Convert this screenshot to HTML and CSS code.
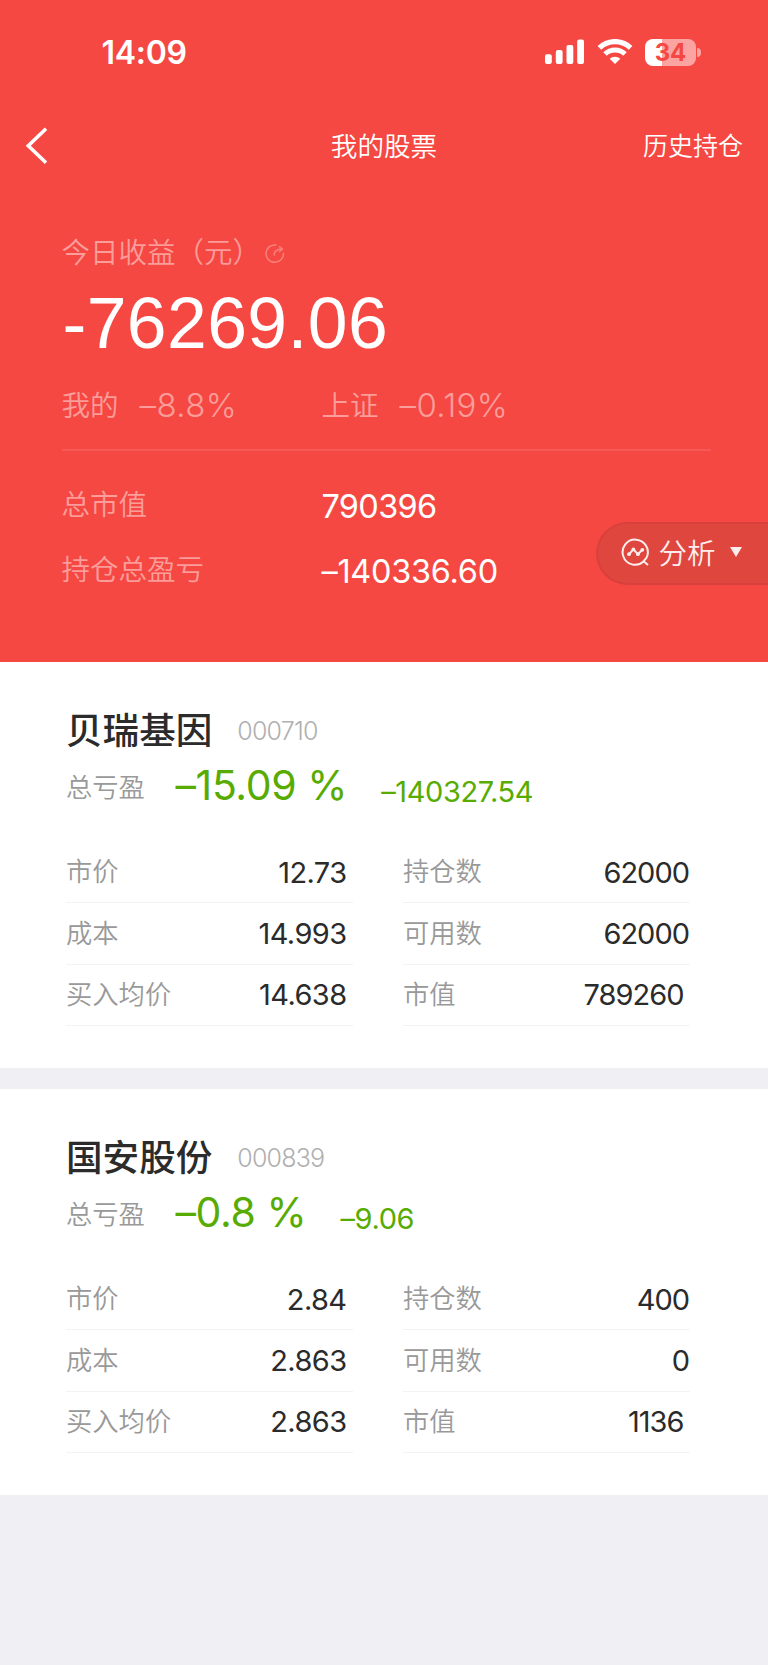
FILE: index.html
```html
<!DOCTYPE html>
<html lang="zh-CN">

<head>
    <meta charset="UTF-8" />
    <meta name="viewport" content="width=device-width, initial-scale=1.0" />
    <title>我的股票</title>
    <link rel="stylesheet" href="styles.css">
</head>

<body>

    <header class="top">
        <div class="status">
            <span class="time">14:09</span>
            <div class="status_icons">
                <svg class="signal" width="40" height="26" viewBox="0 0 40 26" fill="#fff">
                    <rect x="0" y="15.3" width="6.8" height="9.7" rx="2" />
                    <rect x="10.8" y="11" width="6.8" height="14" rx="2" />
                    <rect x="21.5" y="6" width="6.8" height="19" rx="2" />
                    <rect x="32.2" y="0.5" width="6.8" height="24.5" rx="2" />
                </svg>
                <svg class="wifi" width="36" height="26" viewBox="0 0 36 26" fill="none" stroke="#fff">
                    <path d="M2.4 8.8a22.6 22.6 0 0 1 31.2 0" stroke-width="5.2" />
                    <path d="M8 15a14.5 14.5 0 0 1 20 0" stroke-width="5" />
                    <path d="M18 25l-5.3-5.2a7.6 7.6 0 0 1 10.6 0z" fill="#fff" stroke="none" />
                </svg>
                <div class="battery"><span>34</span></div>
                <i class="battery_cap"></i>
            </div>
        </div>

        <nav class="nav">
            <svg class="back" width="24" height="38" viewBox="0 0 24 38" fill="none" stroke="#fff" stroke-width="3.6">
                <path d="M21 1.8L3.3 18.8L21 35.8" />
            </svg>
            <h1>我的股票</h1>
            <a class="history">历史持仓</a>
        </nav>

        <section class="summary">
            <div class="label today">今日收益（元）
                <svg class="share" width="22" height="22" viewBox="0 0 22 22" fill="none" stroke="#fff" stroke-width="1.5">
                    <path d="M12.5 2.1A8.7 8.7 0 1 0 19.4 9.8" />
                    <path d="M10.3 12.6C9.8 8.5 12.6 6.2 17.4 6.1" />
                    <path d="M15 3.2l3.4 2.9-3.4 2.9" />
                </svg>
            </div>
            <div class="total">-76269.06</div>
            <div class="rates">
                <div class="rate"><span class="label">我的</span><b>–8.8%</b></div>
                <div class="rate"><span class="label">上证</span><b>–0.19%</b></div>
            </div>
            <div class="line">
                <span class="label">总市值</span>
                <b>790396</b>
            </div>
            <div class="line">
                <span class="label">持仓总盈亏</span>
                <b class="profit">–140336.60</b>
            </div>
        </section>

        <div class="analyse">
            <svg width="30" height="30" viewBox="0 0 30 30" fill="none" stroke="#fdecec" stroke-width="2">
                <path d="M22.6 24.6A12.6 12.6 0 1 1 25.4 21L22.6 24.2L27 28" />
                <path d="M8 17.2L12.4 12.4L16.9 17.2L21.3 12.8" />
                <g fill="#fdecec" stroke="none">
                    <circle cx="8" cy="17.2" r="1.9" />
                    <circle cx="12.4" cy="12.4" r="1.9" />
                    <circle cx="16.9" cy="17.2" r="1.9" />
                    <circle cx="21.3" cy="12.8" r="1.9" />
                </g>
            </svg>
            <span>分析</span>
            <i class="arrow"></i>
        </div>
    </header>

    <main>
        <section class="stock">
            <div class="name">
                <h2>贝瑞基因</h2>
                <span class="code">000710</span>
            </div>
            <div class="gain">
                <span class="gain_label">总亏盈</span>
                <span class="percent">–15.09 %</span>
                <span class="amount">–140327.54</span>
            </div>
            <div class="detail">
                <dl>
                    <div class="item"><dt>市价</dt><dd>12.73</dd></div>
                    <div class="item"><dt>成本</dt><dd>14.993</dd></div>
                    <div class="item"><dt>买入均价</dt><dd>14.638</dd></div>
                </dl>
                <dl class="right">
                    <div class="item"><dt>持仓数</dt><dd>62000</dd></div>
                    <div class="item"><dt>可用数</dt><dd>62000</dd></div>
                    <div class="item"><dt>市值</dt><dd>789260</dd></div>
                </dl>
            </div>
        </section>

        <section class="stock">
            <div class="name">
                <h2>国安股份</h2>
                <span class="code">000839</span>
            </div>
            <div class="gain">
                <span class="gain_label">总亏盈</span>
                <span class="percent">–0.8 %</span>
                <span class="amount">–9.06</span>
            </div>
            <div class="detail">
                <dl>
                    <div class="item"><dt>市价</dt><dd>2.84</dd></div>
                    <div class="item"><dt>成本</dt><dd>2.863</dd></div>
                    <div class="item"><dt>买入均价</dt><dd>2.863</dd></div>
                </dl>
                <dl class="right">
                    <div class="item"><dt>持仓数</dt><dd>400</dd></div>
                    <div class="item"><dt>可用数</dt><dd>0</dd></div>
                    <div class="item"><dt>市值</dt><dd>1136</dd></div>
                </dl>
            </div>
        </section>
    </main>

</body>

</html>
```
FILE: styles.css
```css
:root {
    --red: #f64843;
    --green: #58ab00;
    --back: #efeff4;
    --soft: rgba(255, 255, 255, 0.48);
}

* {
    box-sizing: border-box;
    margin: 0;
    padding: 0;
}

body {
    background-color: var(--back);
    font-family: Inter, "Noto Sans CJK SC", sans-serif;
    font-weight: 350;
    overflow-x: hidden;
}

h1,
h2,
b {
    font-weight: inherit;
}

.top {
    position: relative;
    height: 662px;
    background-color: var(--red);
    color: #fff;
}

/* status bar */

.status {
    height: 104px;
    padding: 0 67px 0 101.5px;
    display: flex;
    align-items: center;
    justify-content: space-between;
}

.time {
    padding-top: 1px;
    font-size: 32px;
    font-weight: 600;
    letter-spacing: -0.3px;
}

.status_icons {
    display: flex;
    align-items: center;
}

.wifi {
    margin: 0 12px 0 12px;
}

.battery {
    width: 51px;
    height: 27px;
    border-radius: 8px;
    background: linear-gradient(90deg, #fff 17.5px, rgba(255, 255, 255, 0.5) 17.5px);
    color: var(--red);
    font-size: 24px;
    font-weight: 700;
    line-height: 27px;
    text-align: center;
}

.battery_cap {
    width: 4px;
    height: 9px;
    margin-left: 1px;
    border-radius: 0 4px 4px 0;
    background-color: rgba(255, 255, 255, 0.5);
}

/* nav bar */

.nav {
    height: 84px;
    padding: 0 25px;
    display: grid;
    grid-template-columns: 1fr auto 1fr;
    align-items: center;
}

.nav h1 {
    font-size: 26.6px;
    line-height: 40px;
}

.history {
    font-size: 25px;
    line-height: 40px;
    text-align: right;
}

/* summary */

.summary {
    padding: 41px 57px 0 61.5px;
}

.label {
    font-size: 28.5px;
    line-height: 48px;
    color: var(--soft);
}

.today {
    display: flex;
    align-items: center;
}

.share {
    margin: 2px 0 0 2.5px;
    opacity: 0.3;
}

.total {
    height: 92px;
    padding-left: 1px;
    font-family: "Liberation Sans", sans-serif;
    font-weight: 400;
    font-size: 71.5px;
    line-height: 92px;
    letter-spacing: 0.4px;
}

.rates {
    height: 82px;
    margin-bottom: 21px;
    padding-top: 13px;
    display: flex;
    border-bottom: 2px solid rgba(255, 255, 255, 0.1);
}

.rate {
    width: 260px;
    display: flex;
}

.rate b {
    margin-left: 21px;
    font-size: 33px;
    line-height: 46px;
    letter-spacing: 0.4px;
    color: var(--soft);
}

.line {
    height: 65.5px;
    display: flex;
    align-items: center;
}

.line .label {
    width: 260px;
}

.line b {
    padding-top: 3px;
    font-size: 32.5px;
    font-weight: 400;
    letter-spacing: -0.7px;
}

.line .profit {
    letter-spacing: -0.3px;
}

.analyse {
    position: absolute;
    top: 522px;
    right: 0;
    width: 172px;
    height: 63px;
    padding-left: 23px;
    display: flex;
    align-items: center;
    border: 2px solid #d8403d;
    border-right: 0;
    border-radius: 32px 0 0 32px;
    background-color: #de463e;
    color: #fdecec;
    font-size: 28.5px;
}

.analyse svg {
    margin-bottom: 3px;
}

.analyse span {
    margin: 0 14px 0 7.5px;
    line-height: 40px;
}

.arrow {
    margin-bottom: 3px;
    border: 6.5px solid transparent;
    border-top: 10px solid #fdecec;
    border-bottom: 0;
}

/* stock cards */

.stock {
    height: 406px;
    margin-bottom: 21px;
    padding: 45px 78px 0 66px;
    background-color: #fff;
}

.name {
    height: 48px;
    display: flex;
    align-items: center;
}

.name h2 {
    font-size: 36.6px;
    font-weight: 500;
    line-height: 48px;
    color: #2b2b2b;
}

.code {
    margin-left: 25px;
    font-size: 25px;
    font-weight: 300;
    letter-spacing: -0.8px;
    color: #b0b0b0;
}

.gain {
    height: 60px;
    display: flex;
    color: var(--green);
}

.gain span {
    line-height: 60px;
}

.gain_label {
    width: 109.5px;
    padding-top: 3px;
    font-size: 26.3px;
    color: #999;
}

.percent {
    font-size: 41px;
    font-weight: 400;
    letter-spacing: -0.4px;
}

.amount {
    margin-left: 34px;
    padding-top: 7px;
    font-size: 29px;
    font-weight: 400;
    letter-spacing: -0.4px;
}

.detail {
    margin-top: 27px;
    display: flex;
    justify-content: space-between;
}

.detail dl {
    width: 287px;
}

.item {
    height: 61.35px;
    padding-right: 6.5px;
    display: flex;
    align-items: center;
    justify-content: space-between;
    border-bottom: 1.5px solid #f3f3f3;
}

.right .item {
    padding-right: 1px;
}

.right .item:last-child {
    padding-right: 6.5px;
}

.item dt {
    font-size: 26.3px;
    line-height: 40px;
    color: #999;
}

.item dd {
    font-size: 29px;
    font-weight: 400;
    letter-spacing: -0.6px;
    color: #2b2b2b;
}

.right dd {
    letter-spacing: -1px;
}
```
